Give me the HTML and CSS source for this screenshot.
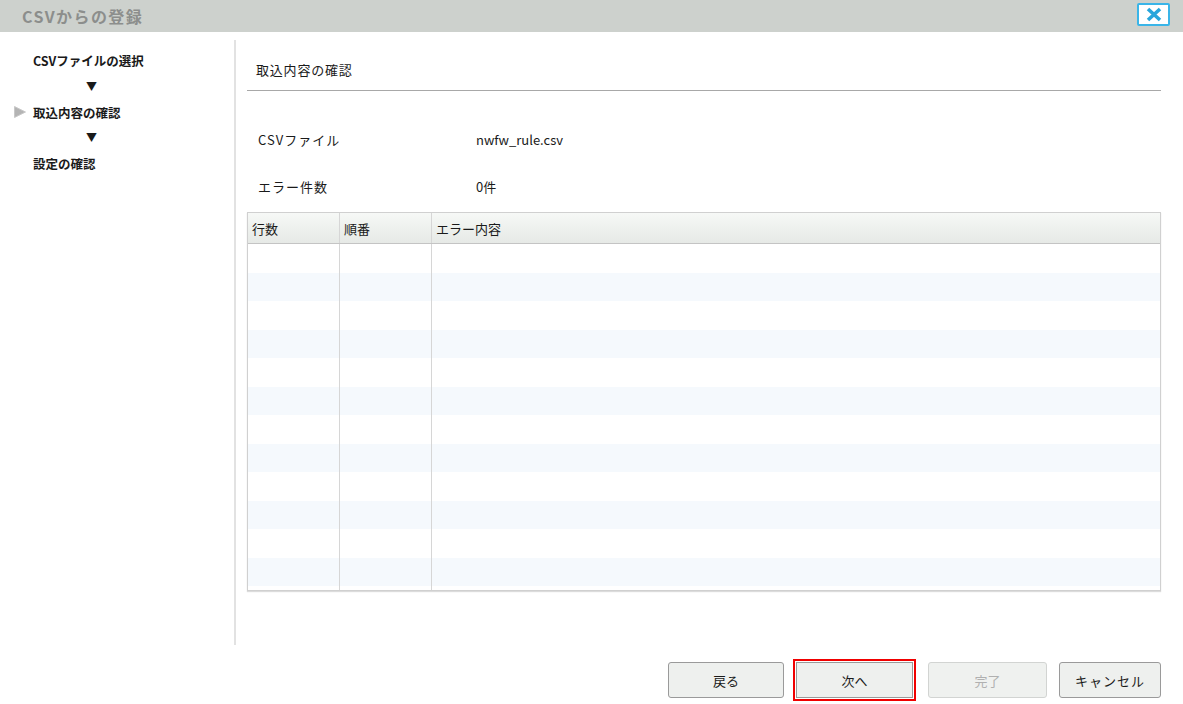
FILE: index.html
```html
<!DOCTYPE html>
<html lang="ja">
<head>
<meta charset="utf-8">
<title>CSVからの登録</title>
<link rel="stylesheet" href="styles.css">
</head>
<body>
<div class="dialog">
  <div class="titlebar">
    <span class="title">CSVからの登録</span>
    <button class="close" aria-label="閉じる">
      <svg width="20" height="15" viewBox="0 0 20 15"><path d="M4 2 L16 13 M16 2 L4 13" stroke="#27a6dc" stroke-width="3.6" stroke-linecap="butt"/></svg>
    </button>
  </div>
  <div class="body">
    <nav class="steps">
      <div class="step"><span class="mark"></span>CSVファイルの選択</div>
      <div class="arrow">▼</div>
      <div class="step current"><span class="mark"><svg width="12" height="12" viewBox="0 0 12 12"><path d="M0.5 0.5 L11.5 6 L0.5 11.5 Z" fill="#b4b4b4" stroke="#c8c8c8" stroke-width="1"/></svg></span>取込内容の確認</div>
      <div class="arrow">▼</div>
      <div class="step"><span class="mark"></span>設定の確認</div>
    </nav>
    <main class="main">
      <div class="heading">取込内容の確認</div>
      <div class="info">
        <div class="info-row"><span class="label">CSVファイル</span><span class="value">nwfw_rule.csv</span></div>
        <div class="info-row"><span class="label">エラー件数</span><span class="value">0件</span></div>
      </div>
      <div class="grid">
        <div class="grid-head">
          <div class="c1">行数</div>
          <div class="c2">順番</div>
          <div class="c3">エラー内容</div>
        </div>
        <div class="grid-body">
          <div class="row"><div class="c1"></div><div class="c2"></div><div class="c3"></div></div>
          <div class="row alt"><div class="c1"></div><div class="c2"></div><div class="c3"></div></div>
          <div class="row"><div class="c1"></div><div class="c2"></div><div class="c3"></div></div>
          <div class="row alt"><div class="c1"></div><div class="c2"></div><div class="c3"></div></div>
          <div class="row"><div class="c1"></div><div class="c2"></div><div class="c3"></div></div>
          <div class="row alt"><div class="c1"></div><div class="c2"></div><div class="c3"></div></div>
          <div class="row"><div class="c1"></div><div class="c2"></div><div class="c3"></div></div>
          <div class="row alt"><div class="c1"></div><div class="c2"></div><div class="c3"></div></div>
          <div class="row"><div class="c1"></div><div class="c2"></div><div class="c3"></div></div>
          <div class="row alt"><div class="c1"></div><div class="c2"></div><div class="c3"></div></div>
          <div class="row"><div class="c1"></div><div class="c2"></div><div class="c3"></div></div>
          <div class="row alt"><div class="c1"></div><div class="c2"></div><div class="c3"></div></div>
          <div class="row filler"><div class="c1"></div><div class="c2"></div><div class="c3"></div></div>
        </div>
      </div>
    </main>
  </div>
  <div class="footer">
    <button class="btn b-back">戻る</button>
    <button class="btn b-next">次へ</button>
    <button class="btn b-done" disabled>完了</button>
    <button class="btn b-cancel">キャンセル</button>
  </div>
</div>
</body>
</html>
```
FILE: styles.css
```css
* { box-sizing: border-box; }
html, body { margin: 0; padding: 0; background: #fff; }
body {
  font-family: "Noto Sans CJK JP", "DejaVu Sans", sans-serif;
  font-size: 13px;
  color: #1a1a1a;
  width: 1183px;
  height: 704px;
  overflow: hidden;
}
.titlebar {
  height: 32px;
  background: #cdd1cd;
  display: flex;
  align-items: center;
  justify-content: space-between;
  padding: 0 13px 0 22px;
}
.title {
  font-size: 16px;
  font-weight: bold;
  color: #8c8e8c;
  letter-spacing: 1.4px;
}
.close {
  width: 33px;
  height: 23px;
  margin-top: -4px;
  background: #fff;
  border: 2px solid #3ab5e8;
  border-radius: 2px;
  padding: 0;
  display: flex;
  align-items: center;
  justify-content: center;
}
.body {
  display: flex;
  margin-top: 8px;
  height: 605px;
}
.steps {
  width: 236px;
  flex: none;
  border-right: 2px solid #e2e2e2;
  padding-top: 8px;
}
.step {
  display: flex;
  align-items: center;
  height: 25.75px;
  padding-left: 14px;
  font-weight: bold;
  font-size: 12.5px;
}
.mark {
  width: 19px;
  flex: none;
  display: flex;
  align-items: center;
}
.arrow {
  height: 25.75px;
  line-height: 25.75px;
  padding-left: 86px;
  font-size: 11px;
}
.main {
  flex: 1;
  padding: 0 22px 0 11px;
}
.heading {
  padding: 20px 0 10px 9px;
  line-height: 20px;
  letter-spacing: 0.8px;
  border-bottom: 1px solid #a8a8a8;
}
.info { padding-top: 25px; }
.info-row {
  display: flex;
  height: 47px;
  align-items: center;
  padding-left: 11px;
}
.label { width: 218px; letter-spacing: 1px; }
.value { flex: 1; }
.grid {
  margin-top: 2px;
  height: 379px;
  border: 1px solid #d0d0d0;
  box-shadow: 0 1px 1px #dcdcdc;
  display: flex;
  flex-direction: column;
}
.grid-head {
  display: flex;
  height: 31px;
  flex: none;
  background: linear-gradient(#f6f8f6, #e6e9e6);
  border-bottom: 1px solid #c4c4c4;
}
.grid-head > div {
  display: flex;
  align-items: center;
  padding-left: 4px;
  font-size: 13px;
}
.c1 { width: 92px; border-right: 1px solid #d6d6d6; flex: none; }
.c2 { width: 92px; border-right: 1px solid #d6d6d6; flex: none; }
.c3 { flex: 1; }
.grid-body {
  flex: 1;
  display: flex;
  flex-direction: column;
}
.row {
  display: flex;
  height: 28.5px;
  flex: none;
}
.row.alt { background: #f5f9fd; }
.row.filler { flex: 1; height: auto; }
.footer {
  display: flex;
  justify-content: flex-end;
  padding: 17px 22px 0 0;
}
.btn {
  height: 36px;
  font-family: "Noto Sans CJK JP", "DejaVu Sans", sans-serif;
  font-size: 13px;
  color: #1a1a1a;
  background: #eef0ee;
  border: 1px solid #9a9a9a;
  border-radius: 3px;
  padding: 0;
}
.b-back { width: 116px; }
.b-next {
  width: 117px;
  margin-left: 12px;
  outline: 2px solid #f00000;
  outline-offset: 1px;
  border-radius: 0;
}
.b-done {
  width: 119px;
  margin-left: 15px;
  color: #b0b0b0;
  border-color: #d2d4d2;
  background: #eff1ef;
}
.b-cancel { width: 102px; margin-left: 12px; letter-spacing: 1px; }
```
